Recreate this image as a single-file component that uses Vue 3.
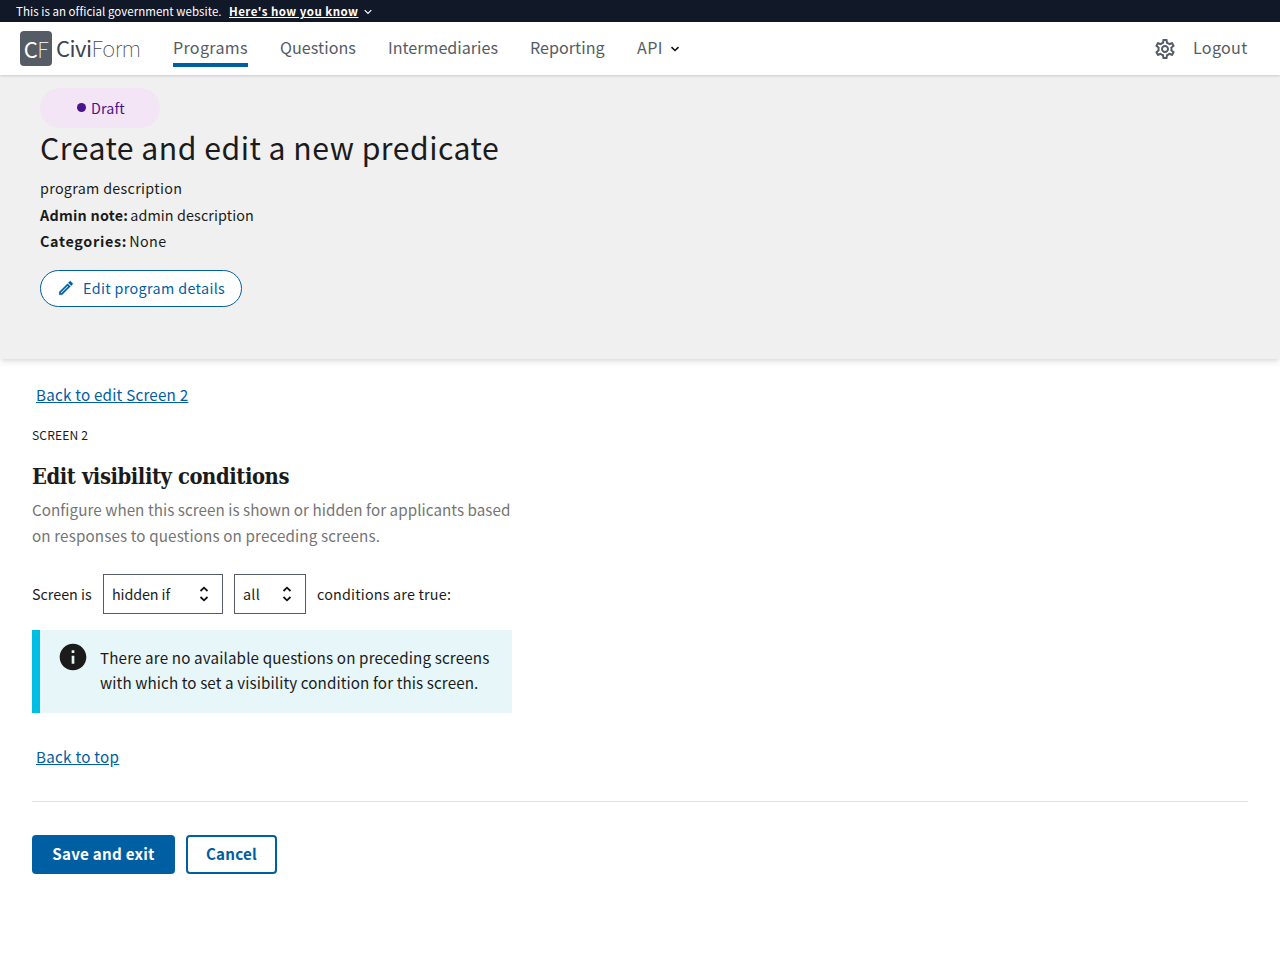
<script setup>
const navItems = [
  { label: 'Programs', active: true, cls: 'programs' },
  { label: 'Questions', cls: 'questions' },
  { label: 'Intermediaries', cls: 'intermediaries' },
  { label: 'Reporting', cls: 'reporting' },
]
</script>

<template>
  <div class="page">
    <div class="banner">
      <span class="official">This is an official government website.</span>
      <a class="know">Here's how you know</a>
      <svg class="chev" viewBox="0 0 10 10"><path d="M1.7 3.2 5 6.5l3.3-3.3" fill="none" stroke="#fff" stroke-width="1.2" /></svg>
    </div>
    <header class="header">
      <div class="logo"><span class="mark"><span class="c">C</span><span class="thin">F</span></span><span class="word">Civi<span class="thin">Form</span></span></div>
      <nav class="nav">
        <a v-for="n in navItems" :key="n.label" class="nav-item" :class="[n.cls, { active: n.active }]"><span>{{ n.label }}</span></a>
        <a class="nav-item api"><span>API</span>
          <svg viewBox="0 0 10 10"><path d="M1.500 3.1 5 6.5 8.500 3.1" fill="none" stroke="#111" stroke-width="1.6" /></svg>
        </a>
      </nav>
      <svg class="gear" viewBox="0 0 24 24" fill="#565c65"><path d="M19.43 12.98c.04-.32.07-.64.07-.98 0-.34-.03-.66-.07-.98l2.11-1.65c.19-.15.24-.42.12-.64l-2-3.46c-.09-.16-.26-.25-.44-.25-.06 0-.12.01-.17.03l-2.49 1c-.52-.4-1.08-.73-1.69-.98l-.38-2.65C14.46 2.18 14.25 2 14 2h-4c-.25 0-.46.18-.49.42l-.38 2.65c-.61.25-1.17.59-1.69.98l-2.49-1c-.06-.02-.12-.03-.18-.03-.17 0-.34.09-.43.25l-2 3.46c-.13.22-.07.49.12.64l2.11 1.65c-.04.32-.07.65-.07.98 0 .33.03.66.07.98l-2.11 1.65c-.19.15-.24.42-.12.64l2 3.46c.09.16.26.25.44.25.06 0 .12-.01.17-.03l2.49-1c.52.4 1.08.73 1.69.98l.38 2.65c.03.24.24.42.49.42h4c.25 0 .46-.18.49-.42l.38-2.65c.61-.25 1.17-.59 1.69-.98l2.49 1c.06.02.12.03.18.03.17 0 .34-.09.43-.25l2-3.46c.12-.22.07-.49-.12-.64l-2.11-1.65zm-1.98-1.71c.04.31.05.52.05.73 0 .21-.02.43-.05.73l-.14 1.13.89.7 1.08.84-.7 1.21-1.27-.51-1.04-.42-.9.68c-.43.32-.84.56-1.25.73l-1.06.43-.16 1.13-.2 1.35h-1.4l-.19-1.35-.16-1.13-1.06-.43c-.43-.18-.83-.41-1.23-.71l-.91-.7-1.06.43-1.27.51-.7-1.21 1.08-.84.89-.7-.14-1.13c-.03-.31-.05-.54-.05-.74s.02-.43.05-.73l.14-1.13-.89-.7-1.08-.84.7-1.21 1.27.51 1.04.42.9-.68c.43-.32.84-.56 1.25-.73l1.06-.43.16-1.13.2-1.35h1.39l.19 1.35.16 1.13 1.06.43c.43.18.83.41 1.23.71l.91.7 1.06-.43 1.27-.51.7 1.21-1.07.85-.89.7.14 1.13zM12 8c-2.21 0-4 1.79-4 4s1.79 4 4 4 4-1.79 4-4-1.79-4-4-4zm0 6c-1.1 0-2-.9-2-2s.9-2 2-2 2 .9 2 2-.9 2-2 2z" /></svg>
      <a class="logout">Logout</a>
    </header>
    <section class="program">
      <div class="pill"><i class="dot"></i><span>Draft</span></div>
      <h1>Create and edit a new predicate</h1>
      <p class="desc">program description</p>
      <p class="note"><b>Admin note:</b><span>admin description</span></p>
      <p class="cats"><b>Categories:</b><span>None</span></p>
      <button class="edit">
        <svg viewBox="0 0 24 24" fill="#005ea2" stroke="#005ea2" stroke-width=".5"><path d="M14.06 9.02l.92.92L5.92 19H5v-.92l9.06-9.06M17.66 3c-.25 0-.51.1-.7.29l-1.83 1.83 3.75 3.75 1.83-1.83c.39-.39.39-1.02 0-1.41l-2.34-2.34c-.2-.2-.45-.29-.71-.29zm-3.6 3.19L3 17.25V21h3.75L17.81 9.94l-3.75-3.75z" /></svg>
        <span>Edit program details</span>
      </button>
    </section>
    <main class="main">
      <a class="link back">Back to edit Screen 2</a>
      <div class="screen">SCREEN 2</div>
      <h2>Edit visibility conditions</h2>
      <p class="help"><span class="l1">Configure when this screen is shown or hidden for applicants based</span><br /><span class="l2">on responses to questions on preceding screens.</span></p>
      <div class="cond">
        <span class="is">Screen is</span>
        <div class="select wide"><span>hidden if</span><svg viewBox="0 0 10 16"><path d="M1.500 5 5 1.700 8.500 5M1.500 11 5 14.300 8.500 11" fill="none" stroke="#111" stroke-width="1.8" /></svg></div>
        <div class="select narrow"><span>all</span><svg viewBox="0 0 10 16"><path d="M1.500 5 5 1.700 8.500 5M1.500 11 5 14.300 8.500 11" fill="none" stroke="#111" stroke-width="1.8" /></svg></div>
        <span class="true">conditions are true:</span>
      </div>
      <div class="alert">
        <svg viewBox="0 0 24 24" fill="#1b1b1b"><path d="M12 2C6.48 2 2 6.48 2 12s4.480 10 10 10 10-4.480 10-10S17.520 2 12 2zm1 15h-2v-6h2v6zm0-8h-2V7h2v2z" /></svg>
        <p><span class="l1">There are no available questions on preceding screens</span><br /><span class="l2">with which to set a visibility condition for this screen.</span></p>
      </div>
      <a class="link top">Back to top</a>
      <hr />
      <div class="actions"><button class="save">Save and exit</button><button class="cancel">Cancel</button></div>
    </main>
  </div>
</template>

<style>
body { margin: 0; background: #fff; }
</style>

<style scoped>
.page { font-family: "Noto Sans CJK SC", "Noto Sans", sans-serif; color: #1b1b1b; font-size: 14.33px; height: 970px; overflow: hidden; }
* { box-sizing: border-box; white-space: nowrap; }
p, h1, h2 { margin: 0; font-weight: 400; }
button { font-family: inherit; padding: 0; }
.banner { height: 22px; background: #111827; color: #fff; display: flex; align-items: center; padding-left: 16px; font-size: 11.5px; line-height: 22px; }
.official { width: 213px; letter-spacing: .04px; }
.know { font-weight: 700; text-decoration: underline; letter-spacing: .46px; width: 129px; }
.chev { width: 10px; height: 10px; margin-left: 5px; margin-top: 2px; }
.header { position: relative; height: 53px; background: #fff; display: flex; padding-left: 20px; box-shadow: 0 1px 3px rgba(0,0,0,.1), 0 1px 2px rgba(0,0,0,.06); color: #565c65; }
.logo { display: flex; width: 153px; padding-top: 9px; }
.mark { width: 32px; height: 35px; border-radius: 4px; background: #565c65; color: #fff; font-size: 22px; line-height: 34px; text-align: center; letter-spacing: -.5px; }
.word { font-size: 22px; line-height: 32px; margin-left: 4px; color: #3d4551; letter-spacing: -.5px; }
.thin { font-weight: 100; }
.nav { display: flex; font-size: 16.1px; line-height: 51px; gap: 32px; }
.nav-item { height: 45px; display: flex; }
.programs { width: 75px; letter-spacing: .3px; }
.questions { width: 76px; letter-spacing: .06px; }
.intermediaries { width: 110px; }
.reporting { width: 75px; letter-spacing: .03px; }
.api { letter-spacing: .4px; }
.active { border-bottom: 4px solid #005ea2; }
.api svg { width: 10px; height: 10px; margin: 22px 0 0 7px; }
.gear { width: 24px; height: 24px; margin: 15px 16px 0 auto; }
.logout { font-size: 16.1px; line-height: 51px; letter-spacing: .3px; width: 87px; }
.program { height: 284px; background: #f0f0f0; padding: 13px 40px 0; box-shadow: 0 4px 6px -1px rgba(0,0,0,.1), 0 2px 4px -1px rgba(0,0,0,.06); letter-spacing: .3px; }
.pill { width: 120px; height: 40px; border-radius: 20px; background: #f3e5f5; color: #4a148c; display: flex; align-items: center; padding-left: 36.5px; letter-spacing: .1px; }
.pill span { margin-top: -2px; }
.dot { width: 9px; height: 9px; border-radius: 50%; background: #4a148c; margin-right: 5.5px; margin-top: -1px; }
h1 { font-size: 30.2px; line-height: 38px; height: 47px; letter-spacing: .5px; }
.desc, .note, .cats { line-height: 26px; }
.note { margin-top: 1px; }
.note b { letter-spacing: .25px; }
.note span { letter-spacing: .11px; }
.cats b { letter-spacing: .7px; }
.cats span { letter-spacing: .45px; }
.note span, .cats span { margin-left: 2px; }
.edit { width: 202px; height: 37px; margin-top: 16px; border: 1px solid #005ea2; border-radius: 19px; background: #fff; color: #005ea2; font-size: 14.33px; display: flex; align-items: center; padding-left: 16px; letter-spacing: .36px; }
.edit span { margin-top: -2px; }
.edit svg { width: 18px; height: 18px; margin-right: 8px; margin-top: -1px; }
.main { padding: 0 32px; font-size: 15.2px; }
.link { display: block; margin-left: 4px; color: #005ea2; text-decoration: underline; }
.back { padding-top: 22px; line-height: 26px; letter-spacing: .22px; }
.screen { margin-top: 18px; font-size: 12.1px; line-height: 20px; letter-spacing: .12px; }
h2 { font-family: "DejaVu Serif Condensed", "DejaVu Serif", serif; font-stretch: condensed; font-weight: 700; font-size: 21.8px; line-height: 30px; margin-top: 17px; letter-spacing: -.42px; }
.help { margin-top: 4px; line-height: 26px; color: #757575; }
.help .l1 { letter-spacing: .055px; }
.help .l2 { letter-spacing: .13px; }
.cond { display: flex; height: 40px; margin-top: 26px; align-items: center; font-size: 14.33px; }
.cond span { margin-top: -2px; }
.is { width: 71px; }
.true { letter-spacing: .2px; }
.select { height: 40px; border: 1px solid #565c65; display: flex; align-items: center; justify-content: space-between; padding: 0 13px 0 8px; }
.wide { width: 120px; margin-right: 11px; letter-spacing: -.1px; }
.narrow { width: 72px; margin-right: 11px; letter-spacing: .25px; }
.select svg { width: 10px; height: 16px; }
.alert { width: 480px; height: 83px; margin-top: 16px; border-left: 8px solid #00bde3; background: #e7f6f8; display: flex; padding: 11px 0 0 17px; }
.alert svg { width: 32px; height: 32px; }
.alert p { margin: 4px 0 0 11px; line-height: 25px; }
.alert .l1 { letter-spacing: .14px; }
.alert .l2 { letter-spacing: .1px; }
.top { margin-top: 30px; line-height: 26px; letter-spacing: .27px; }
hr { border: 0; height: 1px; background: #dfe1e2; margin: 32px 0 33px; }
.actions { display: flex; gap: 11px; }
.save, .cancel { height: 39px; border-radius: 4px; font-size: 15.2px; font-weight: 700; line-height: 1; padding-bottom: 2px; letter-spacing: .22px; }
.save { width: 143px; border: 0; background: #005ea2; color: #fff; }
.cancel { width: 91px; border: 2px solid #005ea2; background: #fff; color: #005ea2; }
</style>
